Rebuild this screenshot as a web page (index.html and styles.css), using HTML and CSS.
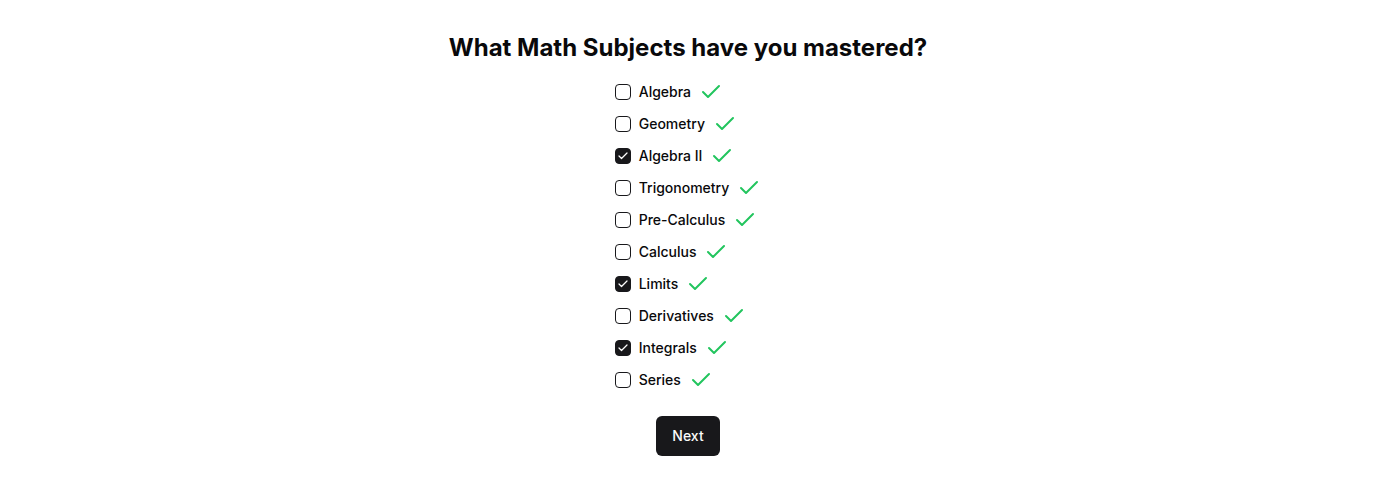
FILE: index.html
```html
<!DOCTYPE html>
<html lang="en">
<head>
<meta charset="utf-8">
<title>Math Subjects</title>
<link rel="stylesheet" href="styles.css">
</head>
<body>
<main class="page">
  <h1 class="title">What Math Subjects have you mastered?</h1>
  <ul class="list">
    <li class="row"><span class="box"></span><span class="label">Algebra</span><svg class="ok" viewBox="0 0 24 24"><path d="M20 6 9 17l-5-5"/></svg></li>
    <li class="row"><span class="box"></span><span class="label">Geometry</span><svg class="ok" viewBox="0 0 24 24"><path d="M20 6 9 17l-5-5"/></svg></li>
    <li class="row"><span class="box checked"><svg viewBox="0 0 24 24"><path d="M20 6 9 17l-5-5"/></svg></span><span class="label">Algebra II</span><svg class="ok" viewBox="0 0 24 24"><path d="M20 6 9 17l-5-5"/></svg></li>
    <li class="row"><span class="box"></span><span class="label">Trigonometry</span><svg class="ok" viewBox="0 0 24 24"><path d="M20 6 9 17l-5-5"/></svg></li>
    <li class="row"><span class="box"></span><span class="label">Pre-Calculus</span><svg class="ok" viewBox="0 0 24 24"><path d="M20 6 9 17l-5-5"/></svg></li>
    <li class="row"><span class="box"></span><span class="label">Calculus</span><svg class="ok" viewBox="0 0 24 24"><path d="M20 6 9 17l-5-5"/></svg></li>
    <li class="row"><span class="box checked"><svg viewBox="0 0 24 24"><path d="M20 6 9 17l-5-5"/></svg></span><span class="label">Limits</span><svg class="ok" viewBox="0 0 24 24"><path d="M20 6 9 17l-5-5"/></svg></li>
    <li class="row"><span class="box"></span><span class="label">Derivatives</span><svg class="ok" viewBox="0 0 24 24"><path d="M20 6 9 17l-5-5"/></svg></li>
    <li class="row"><span class="box checked"><svg viewBox="0 0 24 24"><path d="M20 6 9 17l-5-5"/></svg></span><span class="label">Integrals</span><svg class="ok" viewBox="0 0 24 24"><path d="M20 6 9 17l-5-5"/></svg></li>
    <li class="row"><span class="box"></span><span class="label">Series</span><svg class="ok" viewBox="0 0 24 24"><path d="M20 6 9 17l-5-5"/></svg></li>
  </ul>
  <button class="next" type="button">Next</button>
</main>
</body>
</html>
```

FILE: styles.css
```css
* { box-sizing: border-box; }
html, body { margin: 0; padding: 0; background: #ffffff; }
body {
  font-family: Inter, "Liberation Sans", sans-serif;
  color: #09090b;
}
.page {
  display: flex;
  flex-direction: column;
  align-items: center;
  padding-top: 32px;
}
.title {
  margin: 0 0 16px 0;
  font-size: 24px;
  line-height: 32px;
  font-weight: 700;
  color: #09090b;
}
.list {
  list-style: none;
  margin: 0;
  padding: 0;
  display: flex;
  flex-direction: column;
  align-items: flex-start;
  gap: 8px;
}
.row {
  display: flex;
  align-items: center;
  height: 24px;
}
.box {
  width: 16px;
  height: 16px;
  border: 1px solid #18181b;
  border-radius: 4px;
  display: flex;
  align-items: center;
  justify-content: center;
  background: #fff;
}
.box.checked { background: #18181b; }
.box svg {
  width: 12px;
  height: 12px;
  fill: none;
  stroke: #ffffff;
  stroke-width: 2.5;
  stroke-linecap: round;
  stroke-linejoin: round;
}
.label {
  margin-left: 8px;
  font-size: 14px;
  line-height: 20px;
  font-weight: 500;
}
.ok {
  margin-left: 8px;
  width: 24px;
  height: 24px;
  fill: none;
  stroke: #22c55e;
  stroke-width: 2;
  stroke-linecap: round;
  stroke-linejoin: round;
}
.next {
  margin-top: 24px;
  height: 40px;
  padding: 0 16px 2px 16px;
  border: none;
  border-radius: 6px;
  background: #18181b;
  color: #fafafa;
  font-family: Inter, "Liberation Sans", sans-serif;
  font-size: 14px;
  font-weight: 500;
}
```
